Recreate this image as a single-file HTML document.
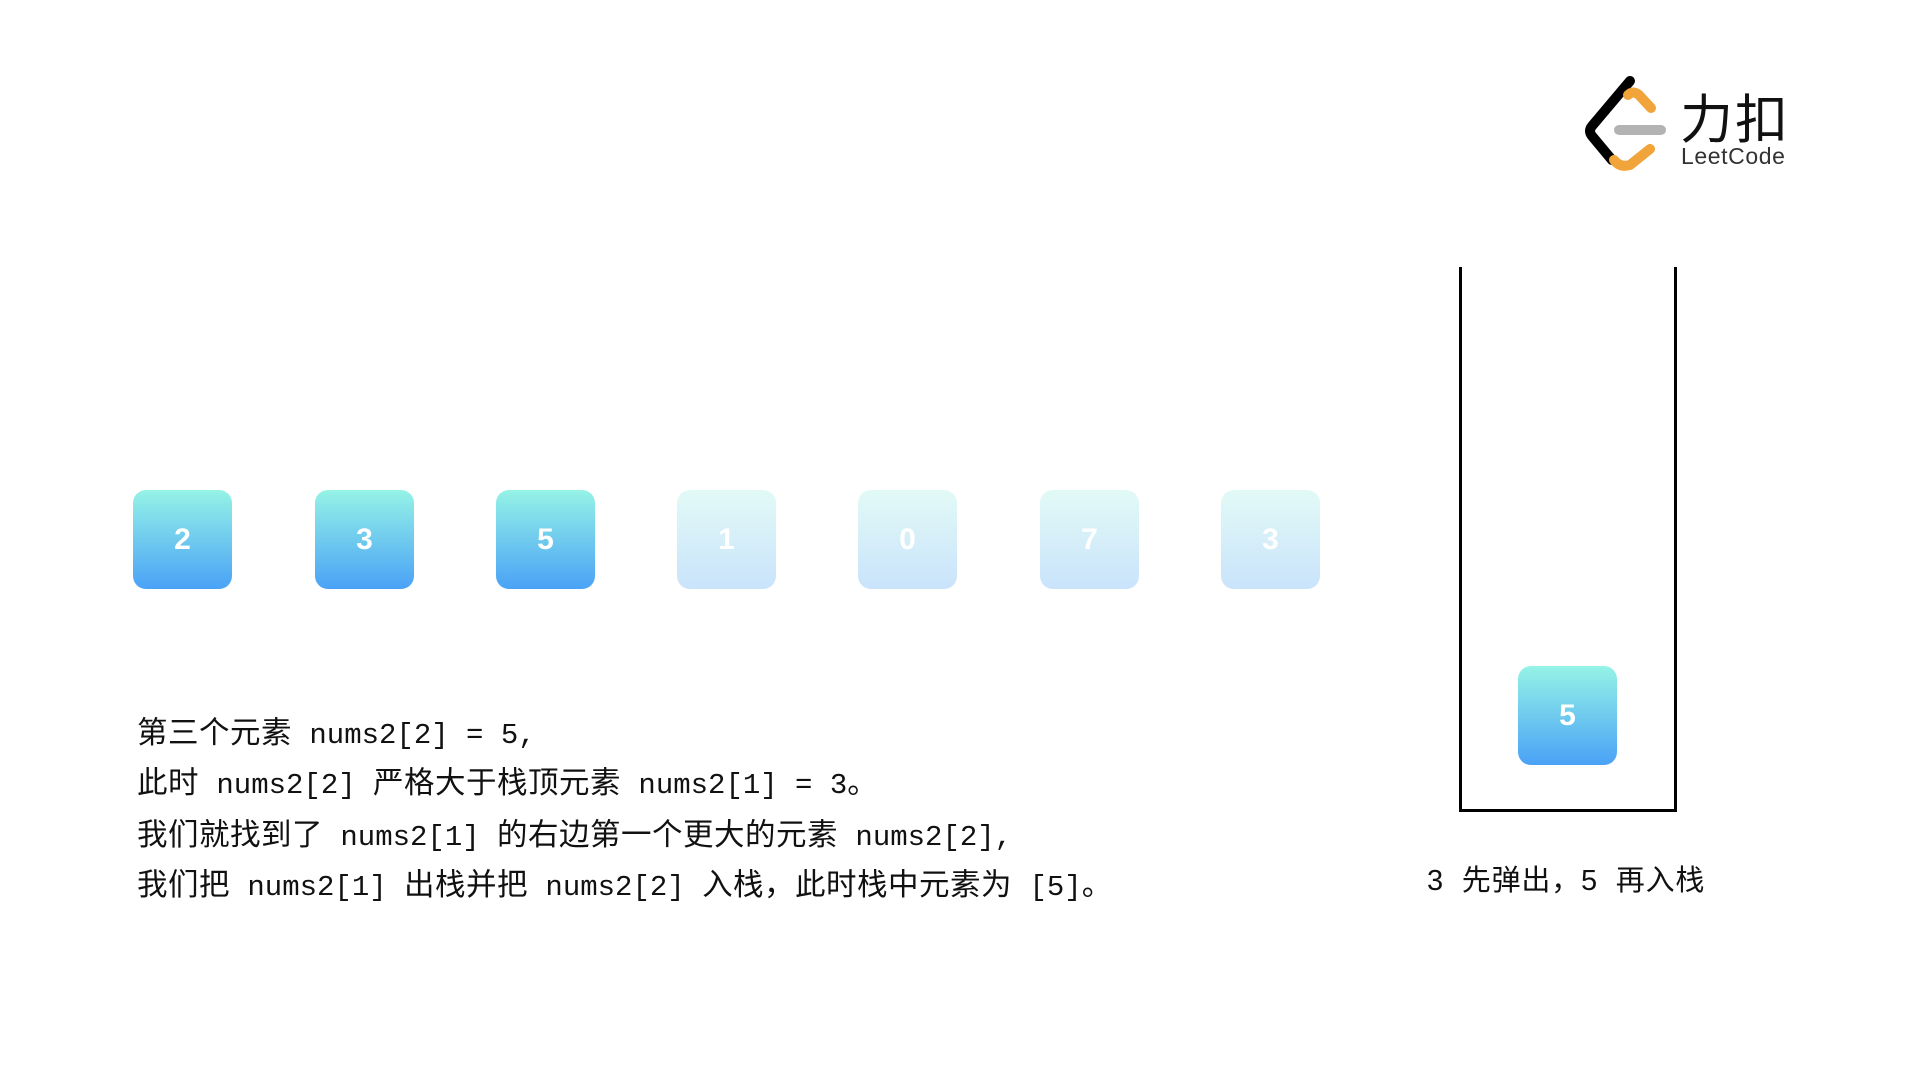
<!DOCTYPE html>
<html><head><meta charset="utf-8"><style>
html,body{margin:0;padding:0;background:#fff;width:1920px;height:1080px;overflow:hidden;position:relative}
.b{position:absolute;width:99px;height:99px;border-radius:13px;color:#fff;font:bold 30px "Liberation Sans",sans-serif;display:flex;align-items:center;justify-content:center;background:linear-gradient(#95f3e6,#4aa2f6)}
.f{background:linear-gradient(#e2faf6,#c9e3fb)}
.t{position:absolute;left:137px;font-size:29px;font-family:"Liberation Mono","Noto Sans CJK SC",monospace;color:#111;white-space:pre;line-height:36px}
.t i{font-style:normal;font-size:30.5px;font-family:"Noto Sans CJK SC",sans-serif;letter-spacing:0.5px}
.l{position:absolute;background:#000}
</style></head><body>
<svg style="position:absolute;left:0;top:0" width="1920" height="200">
<path d="M1630 81 L1592 126 Q1588 131 1592 136 L1612 160" fill="none" stroke="#000" stroke-width="10" stroke-linecap="round"/>
<path d="M1628 95 Q1633 90 1639 95 L1651 108" fill="none" stroke="#f0a43a" stroke-width="10" stroke-linecap="round"/>
<path d="M1614 160 Q1620 168 1630 165 L1650 149" fill="none" stroke="#f0a43a" stroke-width="10" stroke-linecap="round"/>
<path d="M1619 130 L1661 130" stroke="#b3b3b3" stroke-width="10" stroke-linecap="round"/>
<text x="1680" y="138" font-family="Noto Sans CJK SC,sans-serif" font-size="53" fill="#111" font-weight="400" letter-spacing="2">力扣</text>
<text x="1681" y="164" font-family="Liberation Sans,sans-serif" font-size="23" fill="#333" letter-spacing="0.6">LeetCode</text>
</svg>
<div class="b" style="left:133px;top:490px">2</div>
<div class="b" style="left:315px;top:490px">3</div>
<div class="b" style="left:496px;top:490px">5</div>
<div class="b f" style="left:677px;top:490px">1</div>
<div class="b f" style="left:858px;top:490px">0</div>
<div class="b f" style="left:1040px;top:490px">7</div>
<div class="b f" style="left:1221px;top:490px">3</div>
<div class="t" style="top:712px"><i>第三个元素</i> nums2[2] = 5,</div>
<div class="t" style="top:762px"><i>此时</i> nums2[2] <i>严格大于栈顶元素</i> nums2[1] = 3<i>。</i></div>
<div class="t" style="top:814px"><i>我们就找到了</i> nums2[1] <i>的右边第一个更大的元素</i> nums2[2],</div>
<div class="t" style="top:864px"><i>我们把</i> nums2[1] <i>出栈并把</i> nums2[2] <i>入栈，此时栈中元素为</i> [5]<i>。</i></div>
<div class="l" style="left:1459px;top:267px;width:3px;height:545px"></div>
<div class="l" style="left:1674px;top:267px;width:3px;height:545px"></div>
<div class="l" style="left:1459px;top:809px;width:218px;height:3px"></div>
<div class="b" style="left:1518px;top:666px">5</div>
<div style="position:absolute;left:1427px;top:863px;font:29px 'Liberation Sans','Noto Sans CJK SC',sans-serif;color:#111;white-space:pre;line-height:36px;word-spacing:9px;letter-spacing:0.8px">3 先弹出，5 再入栈</div>
</body></html>
